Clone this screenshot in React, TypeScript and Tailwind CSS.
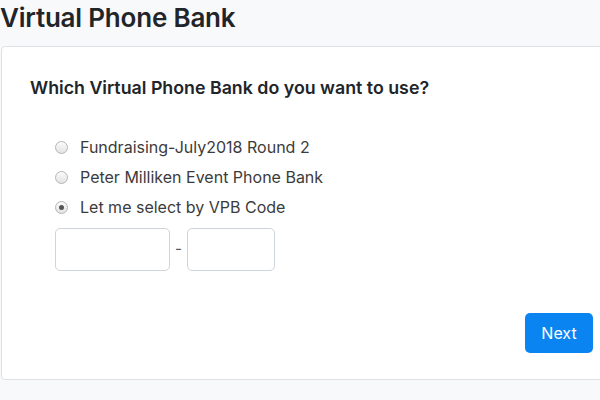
import React from "react";

function Radio({ checked }: { checked?: boolean }) {
  return (
    <span className="w-[13px] h-[13px] rounded-full border border-[#b5b5b5] bg-gradient-to-b from-[#fbfbfb] to-[#e3e3e3] flex items-center justify-center shrink-0">
      {checked && <span className="w-[5px] h-[5px] rounded-full bg-[#555]" />}
    </span>
  );
}

export default function App() {
  const options = [
    { label: "Fundraising-July2018 Round 2", checked: false },
    { label: "Peter Milliken Event Phone Bank", checked: false },
    { label: "Let me select by VPB Code", checked: true },
  ];
  return (
    <div className="w-[600px] h-[400px] overflow-hidden bg-[#f8f9fa] text-[#212529]" style={{ fontFamily: "Inter, 'Liberation Sans', sans-serif" }}>
      <h1 className="text-[26px] leading-[36px] font-semibold tracking-[-0.2px] pl-0 mt-0">Virtual Phone Bank</h1>
      <div className="ml-[1px] mt-[10px] w-[640px] h-[334px] bg-white border border-[#dee2e6] rounded-[4px] pt-[28px] pl-[28px]">
        <h2 className="text-[17.8px] leading-[26px] font-semibold">Which Virtual Phone Bank do you want to use?</h2>
        <div className="mt-[35px] pl-[25px] flex flex-col gap-[8px]">
          {options.map((o) => (
            <label key={o.label} className="flex items-center gap-[12px] h-[22px] text-[16px] text-[#3b3b3b]">
              <Radio checked={o.checked} />
              <span>{o.label}</span>
            </label>
          ))}
        </div>
        <div className="mt-[10px] pl-[25px] flex items-center">
          <div className="w-[115px] h-[43px] border border-[#ced4da] rounded-[5px] bg-white" />
          <span className="w-[17px] text-center text-[15px] text-[#555]">-</span>
          <div className="w-[88px] h-[43px] border border-[#ced4da] rounded-[5px] bg-white" />
        </div>
        <div className="w-[563px] flex justify-end mt-[42px]">
          <button className="w-[68px] h-[40px] rounded-[5px] bg-[#0a84f0] text-white text-[16px]">Next</button>
        </div>
      </div>
    </div>
  );
}
